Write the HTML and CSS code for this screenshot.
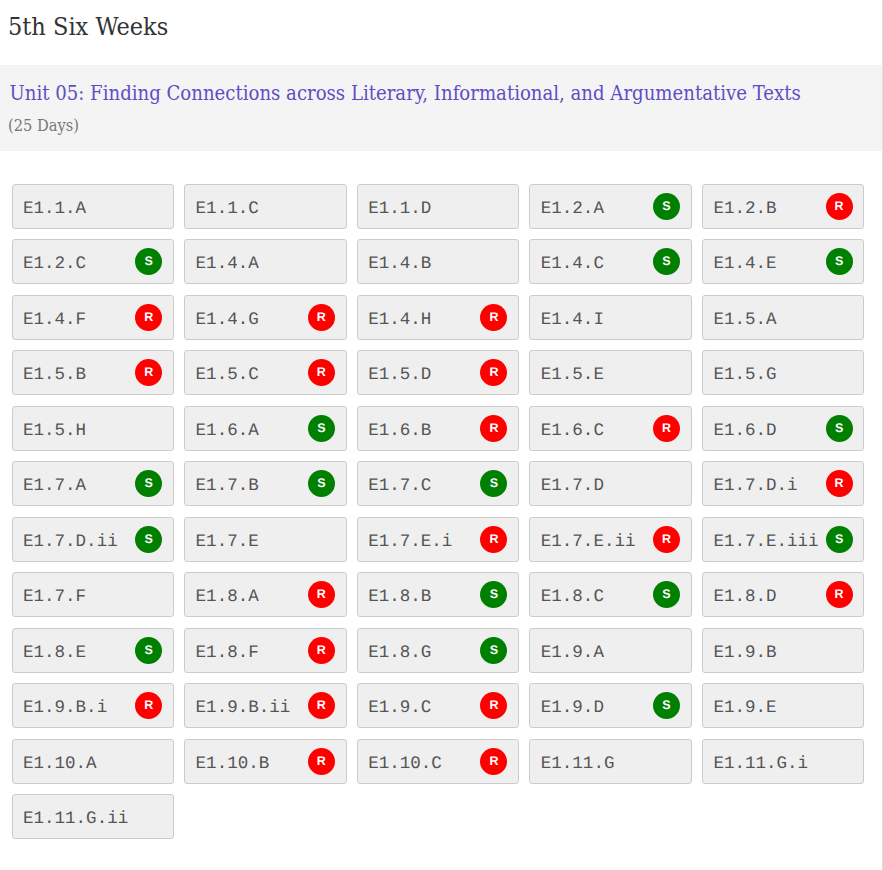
FILE: index.html
```html
<!DOCTYPE html>
<html lang="en">
<head>
<meta charset="utf-8">
<title>5th Six Weeks</title>
<link rel="stylesheet" href="styles.css">
</head>
<body>
<main class="page">
<h1 class="period">5th Six Weeks</h1>
<section class="unit">
<h2 class="unit-title">Unit 05: Finding Connections across Literary, Informational, and Argumentative Texts</h2>
<p class="unit-days">(25 Days)</p>
</section>
<div class="grid">
<div class="tag">E1.1.A</div>
<div class="tag">E1.1.C</div>
<div class="tag">E1.1.D</div>
<div class="tag">E1.2.A<span class="badge s">S</span></div>
<div class="tag">E1.2.B<span class="badge r">R</span></div>
<div class="tag">E1.2.C<span class="badge s">S</span></div>
<div class="tag">E1.4.A</div>
<div class="tag">E1.4.B</div>
<div class="tag">E1.4.C<span class="badge s">S</span></div>
<div class="tag">E1.4.E<span class="badge s">S</span></div>
<div class="tag">E1.4.F<span class="badge r">R</span></div>
<div class="tag">E1.4.G<span class="badge r">R</span></div>
<div class="tag">E1.4.H<span class="badge r">R</span></div>
<div class="tag">E1.4.I</div>
<div class="tag">E1.5.A</div>
<div class="tag">E1.5.B<span class="badge r">R</span></div>
<div class="tag">E1.5.C<span class="badge r">R</span></div>
<div class="tag">E1.5.D<span class="badge r">R</span></div>
<div class="tag">E1.5.E</div>
<div class="tag">E1.5.G</div>
<div class="tag">E1.5.H</div>
<div class="tag">E1.6.A<span class="badge s">S</span></div>
<div class="tag">E1.6.B<span class="badge r">R</span></div>
<div class="tag">E1.6.C<span class="badge r">R</span></div>
<div class="tag">E1.6.D<span class="badge s">S</span></div>
<div class="tag">E1.7.A<span class="badge s">S</span></div>
<div class="tag">E1.7.B<span class="badge s">S</span></div>
<div class="tag">E1.7.C<span class="badge s">S</span></div>
<div class="tag">E1.7.D</div>
<div class="tag">E1.7.D.i<span class="badge r">R</span></div>
<div class="tag">E1.7.D.ii<span class="badge s">S</span></div>
<div class="tag">E1.7.E</div>
<div class="tag">E1.7.E.i<span class="badge r">R</span></div>
<div class="tag">E1.7.E.ii<span class="badge r">R</span></div>
<div class="tag">E1.7.E.iii<span class="badge s">S</span></div>
<div class="tag">E1.7.F</div>
<div class="tag">E1.8.A<span class="badge r">R</span></div>
<div class="tag">E1.8.B<span class="badge s">S</span></div>
<div class="tag">E1.8.C<span class="badge s">S</span></div>
<div class="tag">E1.8.D<span class="badge r">R</span></div>
<div class="tag">E1.8.E<span class="badge s">S</span></div>
<div class="tag">E1.8.F<span class="badge r">R</span></div>
<div class="tag">E1.8.G<span class="badge s">S</span></div>
<div class="tag">E1.9.A</div>
<div class="tag">E1.9.B</div>
<div class="tag">E1.9.B.i<span class="badge r">R</span></div>
<div class="tag">E1.9.B.ii<span class="badge r">R</span></div>
<div class="tag">E1.9.C<span class="badge r">R</span></div>
<div class="tag">E1.9.D<span class="badge s">S</span></div>
<div class="tag">E1.9.E</div>
<div class="tag">E1.10.A</div>
<div class="tag">E1.10.B<span class="badge r">R</span></div>
<div class="tag">E1.10.C<span class="badge r">R</span></div>
<div class="tag">E1.11.G</div>
<div class="tag">E1.11.G.i</div>
<div class="tag">E1.11.G.ii</div>
</div>
</main>
</body>
</html>
```
FILE: styles.css
```css
* { box-sizing: border-box; }
html, body { margin: 0; padding: 0; background: #fff; }
.page {
  height: 870px;
  overflow: hidden;
  border-right: 1px solid #ddd;
  font-family: "Roboto Slab", "DejaVu Serif Condensed", "DejaVu Serif", serif;
}
.period {
  margin: 0;
  height: 65px;
  padding: 12px 0 0 8px;
  font-size: 25px;
  line-height: 30px;
  font-weight: 400;
  color: #333;
}
.unit {
  height: 86px;
  padding: 15px 10px 0 9.5px;
  background: #f4f4f4;
}
.unit-title {
  margin: 0;
  font-size: 20.14px;
  line-height: 27px;
  font-weight: 400;
  white-space: nowrap;
  color: #5f4dc4;
}
.unit-days {
  margin: 7px 0 0 -1.5px;
  font-size: 16.3px;
  line-height: 24px;
  color: #777;
}
.grid {
  display: grid;
  grid-template-columns: repeat(5, 162.6px);
  grid-auto-rows: 45px;
  column-gap: 10px;
  row-gap: 10.5px;
  padding: 32.5px 0 0 11.5px;
}
.tag {
  display: flex;
  align-items: center;
  justify-content: space-between;
  padding: 5px 10.9px 0 10.5px;
  background: #efefef;
  border: 1px solid #ccc;
  border-radius: 3px;
  font-family: "Liberation Mono", monospace;
  font-size: 17.55px;
  text-rendering: geometricPrecision;
  color: #555;
}
.badge {
  flex: none;
  width: 27px;
  height: 27px;
  margin-top: -5px;
  padding-bottom: 1px;
  border-radius: 50%;
  display: flex;
  align-items: center;
  justify-content: center;
  font-family: "Liberation Sans", sans-serif;
  font-size: 12.5px;
  font-weight: 700;
  color: #fff;
}
.badge.s { background: #008000; }
.badge.r { background: #ff0000; }
```
